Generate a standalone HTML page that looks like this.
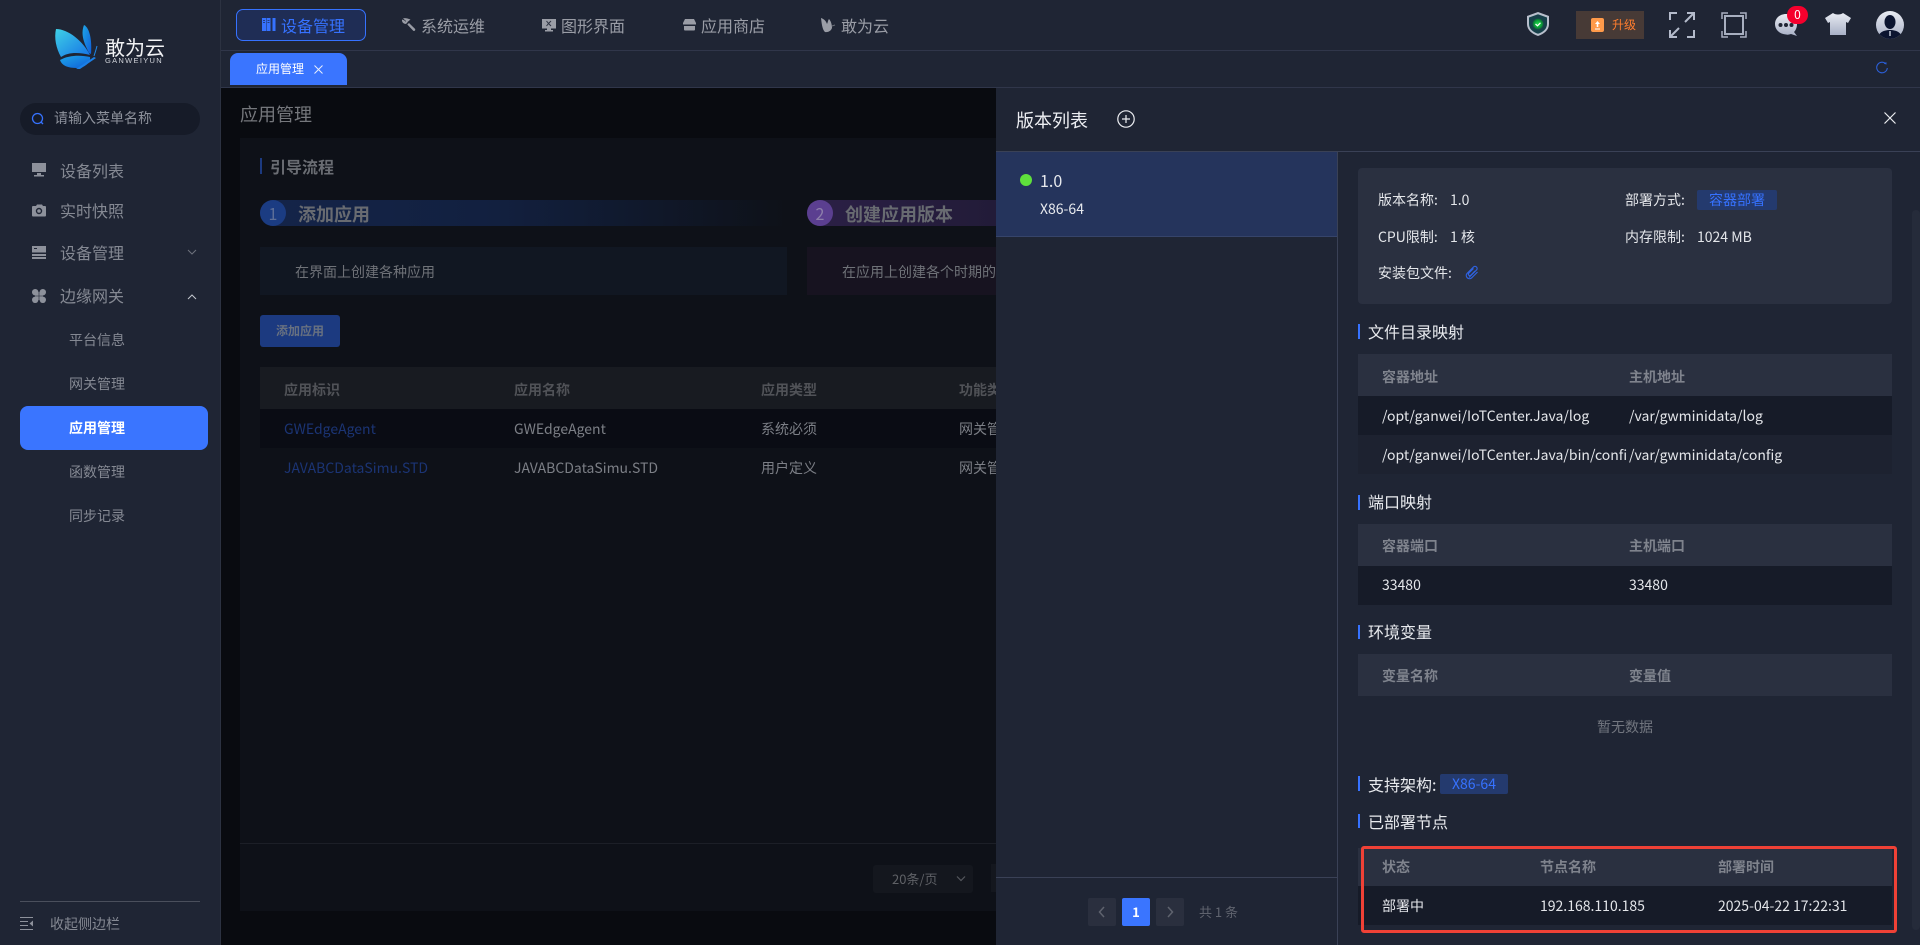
<!DOCTYPE html>
<html lang="zh-CN">
<head>
<meta charset="utf-8">
<title>应用管理</title>
<style>
*{box-sizing:border-box;margin:0;padding:0}
html,body{width:1920px;height:945px;overflow:hidden;background:#090b10;font-family:"Noto Sans CJK SC","Liberation Sans",sans-serif}
.a{position:absolute}
.t{position:absolute;line-height:20px;height:20px;white-space:nowrap;font-size:14px}
svg{position:absolute;overflow:visible}
.nav{font-size:16px;color:#9a9da6;top:15px}
.m{font-size:16px;color:#858993;left:60px}
.s{font-size:14px;color:#858993;left:69px}
.th{color:#7f838d;font-size:14px;font-weight:700}
.td{color:#e4e6ea;font-size:14px}
.h{color:#e8eaee;font-size:16px;left:1368px}
.bar{position:absolute;left:1358px;width:2px;background:#3672ff}
.dth{color:#505257;font-size:14px;font-weight:700}
</style>
</head>
<body>
<!-- main dimmed -->
<div class="a" style="left:221px;top:88px;width:775px;height:857px;background:#090b10"></div>
<div class="t" style="left:240px;top:104px;font-size:18px;color:#75777c;font-weight:400">应用管理</div>
<div class="a" style="left:240px;top:138px;width:756px;height:773px;background:#0e1118"></div>
<div class="a" style="left:260px;top:158px;width:2px;height:16px;background:#1c3a80"></div>
<div class="t" style="left:270px;top:156px;font-size:16px;color:#6a6d73;font-weight:700">引导流程</div>
<div class="a" style="left:260px;top:200px;width:527px;height:26px;border-radius:13px 0 0 13px;background:linear-gradient(90deg,#142449 0%,#12203f 45%,#0e1118 100%)"></div>
<div class="a" style="left:260px;top:200px;width:26px;height:26px;border-radius:50%;background:#1b3c82"></div>
<div class="t" style="left:260px;top:203px;width:26px;text-align:center;font-size:16px;color:#5d6f98">1</div>
<div class="t" style="left:298px;top:204px;font-size:18px;color:#686b71;font-weight:700">添加应用</div>
<div class="a" style="left:807px;top:200px;width:189px;height:26px;border-radius:13px 0 0 13px;background:linear-gradient(90deg,#2b2046 0%,#221b38 100%)"></div>
<div class="a" style="left:807px;top:200px;width:26px;height:26px;border-radius:50%;background:#5b3f90"></div>
<div class="t" style="left:807px;top:203px;width:26px;text-align:center;font-size:16px;color:#8d7fab">2</div>
<div class="t" style="left:845px;top:204px;font-size:18px;color:#686b71;font-weight:700">创建应用版本</div>
<div class="a" style="left:260px;top:247px;width:527px;height:48px;background:#111722"></div>
<div class="t" style="left:295px;top:262px;color:#6f7278">在界面上创建各种应用</div>
<div class="a" style="left:807px;top:247px;width:189px;height:48px;background:#171320"></div>
<div class="t" style="left:842px;top:262px;color:#6f7278;width:154px;overflow:hidden">在应用上创建各个时期的版本</div>
<div class="a" style="left:260px;top:315px;width:80px;height:32px;background:#1c3a80;border-radius:3px"></div>
<div class="t" style="left:276px;top:321px;font-size:12px;color:#687180;font-weight:700">添加应用</div>
<div class="a" style="left:260px;top:367px;width:736px;height:42px;background:#181b21"></div>
<div class="t dth" style="left:284px;top:380px">应用标识</div>
<div class="t dth" style="left:514px;top:380px">应用名称</div>
<div class="t dth" style="left:761px;top:380px">应用类型</div>
<div class="t dth" style="left:959px;top:380px;width:37px;overflow:hidden">功能类型</div>
<div class="a" style="left:260px;top:409px;width:736px;height:39px;background:#0a0c14"></div>
<div class="t" style="left:284px;top:419px;color:#1b3474">GWEdgeAgent</div>
<div class="t" style="left:514px;top:419px;color:#7c7f86">GWEdgeAgent</div>
<div class="t" style="left:761px;top:419px;color:#7c7f86">系统必须</div>
<div class="t" style="left:959px;top:419px;color:#7c7f86;width:37px;overflow:hidden">网关管理</div>
<div class="t" style="left:284px;top:458px;color:#1b3474">JAVABCDataSimu.STD</div>
<div class="t" style="left:514px;top:458px;color:#7c7f86">JAVABCDataSimu.STD</div>
<div class="t" style="left:761px;top:458px;color:#7c7f86">用户定义</div>
<div class="t" style="left:959px;top:458px;color:#7c7f86;width:37px;overflow:hidden">网关管理</div>
<div class="a" style="left:240px;top:843px;width:756px;height:1px;background:#1c1f27"></div>
<div class="a" style="left:873px;top:865px;width:100px;height:28px;background:#14171e;border-radius:3px"></div>
<div class="t" style="left:892px;top:869px;font-size:13px;color:#5f6166">20条/页</div>
<svg style="left:956px;top:875px" width="10" height="8"><path d="M1 1.500 5 5.500 9 1.500" fill="none" stroke="#55585e" stroke-width="1.200"/></svg>
<div class="a" style="left:991px;top:864px;width:5px;height:28px;background:#14171e"></div>

<!-- sidebar -->
<div class="a" style="left:0;top:0;width:221px;height:945px;background:#1f2534;border-right:1px solid #2c3241"></div>
<svg style="left:0;top:0" width="221" height="80">
<defs>
<linearGradient id="g1" x1="0" y1="0" x2="1" y2="1"><stop offset="0" stop-color="#3fd0e6"/><stop offset="1" stop-color="#1472e6"/></linearGradient>
<linearGradient id="g2" x1="0" y1="0" x2="1" y2="1"><stop offset="0" stop-color="#1ea6e8"/><stop offset="1" stop-color="#0f5ed8"/></linearGradient>
<linearGradient id="g3" x1="0" y1="0" x2="0" y2="1"><stop offset="0" stop-color="#e8ebf2"/><stop offset="1" stop-color="#a8b0c6"/></linearGradient>
</defs>
<path d="M56 29C68 29 83 41 90 55C79 52 68 52 61 57C56 48 54 38 56 29Z" fill="url(#g1)"/>
<path d="M84 25C90 28 92 41 91 54L89 53C85 45 80 35 84 25Z" fill="url(#g2)"/>
<path d="M60 60C69 55 81 55 90 57C91 62 85 68 77 68C68 68 62 66 60 60Z" fill="url(#g2)"/>
<path d="M76 69 94 57 96 58 80 69Z" fill="#1b7fe6"/>
<path d="M94 56C95 53 96 50 97 46" fill="none" stroke="#1e88e8" stroke-width="1"/>
</svg>
<div class="t" style="left:105px;top:37px;font-size:20px;color:#f2f3f5;line-height:20px;letter-spacing:0">敢为云</div>
<div class="t" style="left:105px;top:56px;font-size:7.500px;line-height:10px;height:10px;color:#cfd2d8;letter-spacing:1.300px;font-family:'Liberation Sans',sans-serif">GANWEIYUN</div>

<div class="a" style="left:20px;top:103px;width:180px;height:32px;border-radius:16px;background:#161b28"></div>
<svg style="left:31px;top:112px" width="14" height="14"><circle cx="6.500" cy="6.500" r="5" fill="none" stroke="#3672ff" stroke-width="1.300"/><path d="M10 10l2 2" stroke="#3672ff" stroke-width="1.300"/></svg>
<div class="t" style="left:54px;top:108px;color:#8d919b">请输入菜单名称</div>

<svg style="left:32px;top:163px" width="14" height="14"><path d="M0 0h14v9H0zM5 10h4v2h3v1.500H2V12h3z" fill="#8d919b"/></svg>
<div class="t m" style="top:160px">设备列表</div>
<svg style="left:32px;top:204px" width="14" height="14"><path fill-rule="evenodd" d="M1 2h3l1-1.500h5L11 2h2a1 1 0 0 1 1 1v8.500a1 1 0 0 1-1 1H1a1 1 0 0 1-1-1V3a1 1 0 0 1 1-1zM7 3.800a3.200 3.200 0 1 0 0 6.400 3.200 3.200 0 0 0 0-6.400zM7 5.200a1.800 1.800 0 1 1 0 3.600 1.800 1.800 0 0 1 0-3.600z" fill="#8d919b"/></svg>
<div class="t m" style="top:200px">实时快照</div>
<svg style="left:32px;top:246px" width="14" height="13"><path d="M0 0h14v6.500H0zM0 8h14v2H0zM0 11h14v2H0z" fill="#8d919b"/><path d="M2 2h3v1H2z" fill="#1f2534"/></svg>
<div class="t m" style="top:242px">设备管理</div>
<svg style="left:187px;top:249px" width="10" height="7"><path d="M1 1 5 5 9 1" fill="none" stroke="#6e727c" stroke-width="1"/></svg>
<svg style="left:32px;top:289px" width="14" height="14"><g fill="#8d919b"><circle cx="3.200" cy="3.200" r="3.200"/><circle cx="10.800" cy="3.200" r="3.200"/><circle cx="3.200" cy="10.800" r="3.200"/><circle cx="10.800" cy="10.800" r="3.200"/><rect x="3" y="3" width="8" height="8"/></g><path d="M7 0v14M0 7h14" stroke="#1f2534" stroke-width=".6"/></svg>
<div class="t m" style="top:285px">边缘网关</div>
<svg style="left:187px;top:293px" width="10" height="7"><path d="M1 6 5 2 9 6" fill="none" stroke="#c4c7ce" stroke-width="1"/></svg>
<div class="t s" style="top:330px">平台信息</div>
<div class="t s" style="top:374px">网关管理</div>
<div class="a" style="left:20px;top:406px;width:188px;height:44px;border-radius:8px;background:#3a75ff"></div>
<div class="t s" style="top:418px;color:#fff;font-weight:700">应用管理</div>
<div class="t s" style="top:462px">函数管理</div>
<div class="t s" style="top:506px">同步记录</div>
<div class="a" style="left:20px;top:901px;width:180px;height:1px;background:#4a4f5c"></div>
<svg style="left:20px;top:917px" width="14" height="14"><path d="M0 .500h13M0 4.500h8M0 8.500h8M0 12.500h13" stroke="#8d919b" stroke-width="1"/><path d="M13 3.500v6L9.500 6.500z" fill="#8d919b"/></svg>
<div class="t" style="left:50px;top:914px;color:#858993">收起侧边栏</div>

<!-- top bar -->
<div class="a" style="left:221px;top:0;width:1699px;height:88px;background:#1f2534"></div>
<div class="a" style="left:221px;top:50px;width:1699px;height:1px;background:#30364a"></div>
<div class="a" style="left:221px;top:87px;width:1699px;height:1px;background:#30364a"></div>
<div class="a" style="left:236px;top:9px;width:130px;height:32px;border:1px solid #3672ff;border-radius:7px;background:#1f2d55"></div>
<svg style="left:262px;top:18px" width="14" height="14"><path d="M0 0h4v13H0zM4.500 0h4v13h-4zM10.500 0h3v13h-3z" fill="#3672ff"/><path d="M1 2.500h2M1 4.500h2M5.500 2.500h2M5.500 4.500h2" stroke="#1f2d55" stroke-width=".8"/></svg>
<div class="t nav" style="left:281px;color:#3672ff">设备管理</div>
<svg style="left:402px;top:18px" width="14" height="14"><path d="M1 .5 4 3 3.500 4.500 5 5.500 5.500 4 8.500 1.500 5.500 .5C3.500 0 2 0 1 .5zM5.300 6.500 11 12.500c.6.600 1.400.600 1.900 0s.5-1.200 0-1.800L7 5z M0 1.500C-.3 3.500.8 5.500 3.500 6L5 5 2.500 2.500z" fill="#9a9da6"/></svg>
<div class="t nav" style="left:421px">系统运维</div>
<svg style="left:542px;top:19px" width="14" height="13"><path d="M0 0h14v9.500H9v1.500h2v1.500H3V11h2V9.500H0z" fill="#9a9da6"/><path d="M4.500 2 6.500 4.500 4.500 7M9 2 6.500 4.500 9 7" stroke="#2c3241" fill="none"/></svg>
<div class="t nav" style="left:561px">图形界面</div>
<svg style="left:683px;top:19px" width="13" height="12"><path d="M2 0h9l2 4v1.500H0V4zM1 7h11v3.500a1 1 0 0 1-1 1H2a1 1 0 0 1-1-1z" fill="#9a9da6"/></svg>
<div class="t nav" style="left:701px">应用商店</div>
<svg style="left:821px;top:18px" width="14" height="15"><path d="M0 0c3 1 5 3 6 6 1-2 1-4 2-5 2 2 3 6 3 9-1 3-4 4.500-7 4-2-2-3-5-4-14z" fill="#9a9da6"/><path d="M11 8 14 7" stroke="#6a6e78"/></svg>
<div class="t nav" style="left:841px">敢为云</div>

<div class="a" style="left:230px;top:53px;width:117px;height:32px;border-radius:8px 8px 0 0;background:#3a75ff"></div>
<div class="t" style="left:256px;top:59px;font-size:12px;color:#fff">应用管理</div>
<svg style="left:314px;top:65px" width="9" height="9"><path d="M.5.500l8 8M8.500.500l-8 8" stroke="#e8eefc" stroke-width="1"/></svg>
<svg style="left:1876px;top:62px" width="12" height="12"><path d="M9.500 1.500A5.300 5.300 0 1 0 11.300 6" fill="none" stroke="#2b5fd9" stroke-width="1.100"/><path d="M7.700 1.700 10.600 2.500 10.300 0z" fill="#2b5fd9"/></svg>

<!-- top right -->
<svg style="left:1527px;top:12px" width="22" height="24">
<defs><radialGradient id="gs"><stop offset="0" stop-color="#1fe04a"/><stop offset=".6" stop-color="#0ca83a"/><stop offset="1" stop-color="#0f5c3a"/></radialGradient></defs>
<path d="M11 0 22 4v8c0 6-5 10-11 12C5 22 0 18 0 12V4z" fill="#b8bfcc"/>
<path d="M11 2.200 20 5.500V12c0 5-4 8-9 9.800C6 20 2 17 2 12V5.500z" fill="#17404a"/>
<circle cx="11" cy="12" r="5.500" fill="url(#gs)"/>
<path d="M8.500 12l2 1.800 3-3" fill="none" stroke="#fff" stroke-width="1.200"/>
</svg>
<div class="a" style="left:1576px;top:11px;width:68px;height:28px;background:#473a36"></div>
<svg style="left:1591px;top:18px" width="13" height="14"><rect width="13" height="14" rx="2" fill="#ff9a4a"/><path d="M6.500 3 9 6H7.300v3H5.700V6H4zM4 10.500h5v1H4z" fill="#fff"/></svg>
<div class="t" style="left:1612px;top:15px;font-size:12px;color:#ff7d2e">升级</div>
<svg style="left:1669px;top:12px" width="26" height="26"><g fill="none" stroke="#b4bbcb" stroke-width="2"><path d="M8 1H1v7M25 18v7h-7"/><path d="M16 10 25 1M18 1h7v7M10 16 1 25M8 25H1v-7"/></g></svg>
<svg style="left:1721px;top:12px" width="26" height="26"><rect x="4" y="4" width="18" height="18" fill="none" stroke="#a8afc0" stroke-width="2"/><path d="M7 1H1v6M19 1h6v6M1 19v6h6M25 19v6h-6" fill="none" stroke="#a8afc0" stroke-width="1.500"/></svg>
<svg style="left:1775px;top:14px" width="24" height="23"><path d="M11 0C17 0 22 4 22 10c0 3-1 6-3 8l3 4-6-2c-2 .5-3 1-5 .5C5 20 0 16 0 10S5 0 11 0z" fill="url(#g3)"/><circle cx="5.500" cy="11" r="2" fill="#1f2534"/><circle cx="11" cy="11" r="2" fill="#1f2534"/><circle cx="16.500" cy="11" r="2" fill="#1f2534"/></svg>
<div class="a" style="left:1787px;top:6px;width:21px;height:18px;border-radius:9px;background:#f5002d;color:#fff;font-size:12px;line-height:18px;text-align:center">0</div>
<svg style="left:1825px;top:13px" width="26" height="22"><path d="M8 0C10 2 16 2 18 0L26 5 23 10 21 9V22H5V9L3 10 0 5z" fill="url(#g3)"/></svg>
<svg style="left:1876px;top:11px" width="28" height="28"><defs><clipPath id="av"><circle cx="14" cy="14" r="14"/></clipPath></defs><circle cx="14" cy="14" r="14" fill="url(#g3)"/><g clip-path="url(#av)" fill="#0c1530"><ellipse cx="14" cy="11" rx="5.500" ry="7"/><path d="M2 28c0-6 5-9 12-9s12 3 12 9z"/></g><path d="M13.200 20h1.600v5h-1.600z" fill="#b4bbcb"/></svg>

<!-- drawer -->
<div class="a" style="left:996px;top:88px;width:924px;height:857px;background:#1f2534"></div>
<div class="a" style="left:996px;top:151px;width:924px;height:1px;background:#3a4156"></div>
<div class="t" style="left:1016px;top:109px;font-size:18px;color:#eceef2;line-height:22px;height:22px">版本列表</div>
<svg style="left:1117px;top:110px" width="18" height="18"><circle cx="9" cy="9" r="8.200" fill="none" stroke="#eceef2" stroke-width="1.200"/><path d="M5 9h8M9 5v8" stroke="#eceef2" stroke-width="1.200"/></svg>
<svg style="left:1884px;top:112px" width="12" height="12"><path d="M.5.500l11 11M11.500.500l-11 11" stroke="#eceef2" stroke-width="1.200"/></svg>

<div class="a" style="left:996px;top:152px;width:341px;height:85px;background:#25345c;border-bottom:1px solid #36446a"></div>
<div class="a" style="left:1020px;top:174px;width:12px;height:12px;border-radius:50%;background:#5fe03c"></div>
<div class="t" style="left:1040px;top:170px;font-size:16px;color:#e8eaee">1.0</div>
<div class="t" style="left:1040px;top:199px;font-size:14px;color:#e8eaee">X86-64</div>
<div class="a" style="left:1337px;top:152px;width:1px;height:793px;background:#3a4156"></div>
<div class="a" style="left:996px;top:877px;width:341px;height:1px;background:#3a4156"></div>
<div class="a" style="left:1088px;top:898px;width:28px;height:28px;border-radius:2px;background:#2a2f3e"></div>
<svg style="left:1098px;top:906px" width="8" height="12"><path d="M6 1 1.500 6 6 11" fill="none" stroke="#5f636e" stroke-width="1.500"/></svg>
<div class="a" style="left:1122px;top:898px;width:28px;height:28px;border-radius:2px;background:#3a75ff;color:#fff;font-size:13px;font-weight:700;line-height:28px;text-align:center">1</div>
<div class="a" style="left:1156px;top:898px;width:28px;height:28px;border-radius:2px;background:#2a2f3e"></div>
<svg style="left:1166px;top:906px" width="8" height="12"><path d="M2 1 6.500 6 2 11" fill="none" stroke="#5f636e" stroke-width="1.500"/></svg>
<div class="t" style="left:1199px;top:902px;font-size:13px;color:#5f636e">共 1 条</div>

<!-- scrollbar -->
<div class="a" style="left:1912px;top:210px;width:8px;height:720px;border-radius:4px;background:#252b3a"></div>

<!-- detail -->
<div class="a" style="left:1358px;top:168px;width:534px;height:136px;border-radius:4px;background:#2a3040"></div>
<div class="t td" style="left:1378px;top:190px">版本名称:</div>
<div class="t td" style="left:1450px;top:190px">1.0</div>
<div class="t td" style="left:1625px;top:190px">部署方式:</div>
<div class="a" style="left:1697px;top:190px;width:80px;height:20px;border-radius:2px;background:#243a6e;color:#3672ff;font-size:14px;line-height:20px;text-align:center">容器部署</div>
<div class="t td" style="left:1378px;top:227px">CPU限制:</div>
<div class="t td" style="left:1450px;top:227px">1 核</div>
<div class="t td" style="left:1625px;top:227px">内存限制:</div>
<div class="t td" style="left:1697px;top:227px">1024 MB</div>
<div class="t td" style="left:1378px;top:263px">安装包文件:</div>
<svg style="left:1465px;top:265px" width="14" height="14"><path d="M4 12.500 11.500 5a2 2 0 0 0-3-3L2 8.500a3.200 3.200 0 0 0 4.500 4.500L12.500 7M8.500 3.500 3.500 8.500A1.500 1.500 0 0 0 5.500 10.500L10 6" fill="none" stroke="#2f62e0" stroke-width="1.200"/></svg>

<div class="bar" style="top:324px;height:15px"></div>
<div class="t h" style="top:321px">文件目录映射</div>
<div class="a" style="left:1358px;top:354px;width:534px;height:42px;background:#2a3040"></div>
<div class="t th" style="left:1382px;top:367px">容器地址</div>
<div class="t th" style="left:1629px;top:367px">主机地址</div>
<div class="a" style="left:1358px;top:396px;width:534px;height:39px;background:#161b28"></div>
<div class="a" style="left:1358px;top:435px;width:534px;height:39px;background:#1d2230"></div>
<div class="t td" style="left:1382px;top:406px">/opt/ganwei/IoTCenter.Java/log</div>
<div class="t td" style="left:1629px;top:406px">/var/gwminidata/log</div>
<div class="t td" style="left:1382px;top:445px;width:245px;overflow:hidden">/opt/ganwei/IoTCenter.Java/bin/config</div>
<div class="t td" style="left:1629px;top:445px">/var/gwminidata/config</div>

<div class="bar" style="top:495px;height:15px"></div>
<div class="t h" style="top:491px">端口映射</div>
<div class="a" style="left:1358px;top:524px;width:534px;height:42px;background:#2a3040"></div>
<div class="t th" style="left:1382px;top:536px">容器端口</div>
<div class="t th" style="left:1629px;top:536px">主机端口</div>
<div class="a" style="left:1358px;top:566px;width:534px;height:39px;background:#161b28"></div>
<div class="t td" style="left:1382px;top:575px">33480</div>
<div class="t td" style="left:1629px;top:575px">33480</div>

<div class="bar" style="top:625px;height:14px"></div>
<div class="t h" style="top:621px">环境变量</div>
<div class="a" style="left:1358px;top:654px;width:534px;height:42px;background:#2a3040"></div>
<div class="t th" style="left:1382px;top:666px">变量名称</div>
<div class="t th" style="left:1629px;top:666px">变量值</div>
<div class="t" style="left:1597px;top:717px;color:#72767f">暂无数据</div>

<div class="bar" style="top:776px;height:15px"></div>
<div class="t h" style="top:774px">支持架构:</div>
<div class="a" style="left:1440px;top:774px;width:68px;height:20px;border-radius:2px;background:#243a6e;color:#3672ff;font-size:14px;line-height:20px;text-align:center">X86-64</div>
<div class="bar" style="top:814px;height:14px"></div>
<div class="t h" style="top:811px">已部署节点</div>

<div class="a" style="left:1358px;top:848px;width:534px;height:38px;background:#2a3040"></div>
<div class="a" style="left:1358px;top:886px;width:534px;height:39px;background:#161b28"></div>
<div class="t th" style="left:1382px;top:857px">状态</div>
<div class="t th" style="left:1540px;top:857px">节点名称</div>
<div class="t th" style="left:1718px;top:857px">部署时间</div>
<div class="t td" style="left:1382px;top:896px">部署中</div>
<div class="t td" style="left:1540px;top:896px">192.168.110.185</div>
<div class="t td" style="left:1718px;top:896px">2025-04-22 17:22:31</div>
<div class="a" style="left:1361px;top:846px;width:536px;height:87px;border:3px solid #ef4136;border-radius:3px"></div>
</body>
</html>
